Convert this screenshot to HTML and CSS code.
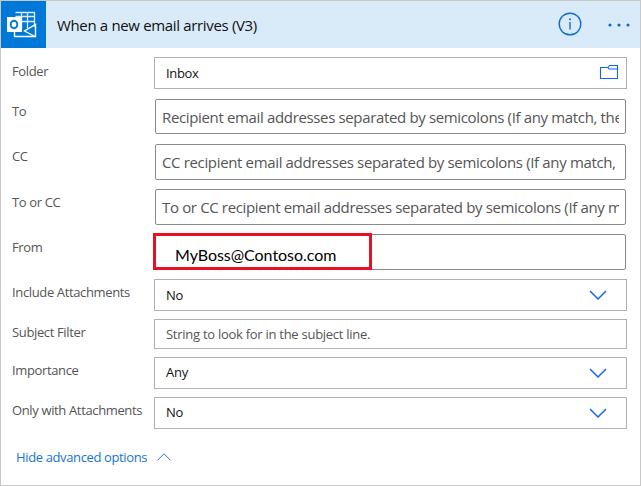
FILE: index.html
```html
<!DOCTYPE html>
<html lang="en">
<head>
<meta charset="utf-8">
<title>When a new email arrives (V3)</title>
<link rel="stylesheet" href="styles.css">
</head>
<body>
<main class="card">
  <header class="header">
    <div class="app-icon">
      <svg width="45" height="47" viewBox="0 0 45 47" fill="none">
        <path d="M14.500 11.500H33.500V26M14.500 15.500H33.500M14.500 20.500H33.500M20.500 11.500V30M26.500 11.500V27" stroke="#d9ebfa" stroke-width="1.300"/>
        <path d="M13 36V30L21 27L34.500 35.500" fill="#0078d7"/>
        <path d="M13.500 30V35.500H34.500V23.500L23.500 30L34 35.500" stroke="#fff" stroke-width="1.400"/>
        <rect x="6" y="16" width="15" height="15" fill="#fff"/>
        <ellipse cx="13" cy="23.500" rx="3.300" ry="3.800" stroke="#0078d7" stroke-width="2"/>
      </svg>
    </div>
    <h1 class="title">When a new email arrives (V3)</h1>
    <svg class="info" width="24" height="24" viewBox="0 0 24 24" fill="none">
      <circle cx="12" cy="12" r="10.800" stroke="#0f6fd1" stroke-width="1.400"/>
      <path d="M12 10V17.500" stroke="#0f6fd1" stroke-width="1.400"/>
      <circle cx="12" cy="7.300" r="1" fill="#0f6fd1"/>
    </svg>
    <svg class="more" width="24" height="4" viewBox="0 0 24 4" fill="#0f6fd1">
      <circle cx="3" cy="2" r="1.600"/><circle cx="12" cy="2" r="1.600"/><circle cx="21" cy="2" r="1.600"/>
    </svg>
  </header>
  <section class="fields">
    <div class="row folder"><span class="label">Folder</span>
      <div class="box"><span class="value inbox">Inbox</span>
        <svg class="folder-icon" width="20" height="16" viewBox="0 0 20 16" fill="none" stroke="#1464f0"><path d="M1.500 3.500H9L10.500 1.500H18.500V14.500H1.500ZM9 3.500L10 5H18.500" stroke-width="1.100"/></svg>
      </div></div>
    <div class="row large to"><span class="label">To</span>
      <div class="box"><span class="hint">Recipient email addresses separated by semicolons (If any match, the trigger will run)</span></div></div>
    <div class="row large cc"><span class="label">CC</span>
      <div class="box"><span class="hint">CC recipient email addresses separated by semicolons (If any match, the trigger will run)</span></div></div>
    <div class="row large tocc"><span class="label">To or CC</span>
      <div class="box"><span class="hint">To or CC recipient email addresses separated by semicolons (If any match, the trigger will run)</span></div></div>
    <div class="row large from"><span class="label">From</span>
      <div class="box"><div class="highlight">MyBoss@Contoso.com</div></div></div>
    <div class="row include"><span class="label">Include Attachments</span>
      <div class="box"><span class="value">No</span><svg class="chevron" width="18" height="10" viewBox="0 0 18 10"><path d="M1 1L9 9L17 1"/></svg></div></div>
    <div class="row subject"><span class="label">Subject Filter</span>
      <div class="box"><span class="value subject-hint">String to look for in the subject line.</span></div></div>
    <div class="row importance"><span class="label">Importance</span>
      <div class="box"><span class="value">Any</span><svg class="chevron" width="18" height="10" viewBox="0 0 18 10"><path d="M1 1L9 9L17 1"/></svg></div></div>
    <div class="row only"><span class="label">Only with Attachments</span>
      <div class="box"><span class="value">No</span><svg class="chevron" width="18" height="10" viewBox="0 0 18 10"><path d="M1 1L9 9L17 1"/></svg></div></div>
  </section>
  <a class="toggle"><span>Hide advanced options</span><svg width="14" height="8" viewBox="0 0 14 8" fill="none" stroke="#2b6fd6"><path d="M.5 7.300L7 .8L13.500 7.300"/></svg></a>
</main>
</body>
</html>
```
FILE: styles.css
```css
* { box-sizing: border-box; }
body {
  margin: 0;
  background: #fff;
  font-family: "Open Sans", "Noto Sans", sans-serif;
  font-size: 13px;
  line-height: 18px;
  white-space: nowrap;
}
.card {
  width: 641px;
  height: 486px;
  border: 1px solid #c8c8c8;
}
.header {
  display: flex;
  align-items: center;
  height: 47px;
  padding-right: 9px;
  background: #d9eaf8;
}
.app-icon {
  width: 45px;
  height: 47px;
  background: #0078d7;
}
.app-icon svg { display: block; }
.title {
  flex: 1;
  margin: 0 0 0 11px;
  color: #111;
  font-size: 15px;
  font-weight: 400;
  letter-spacing: -0.34px;
}
.info { margin: 0 25px 1px 0; }
.fields { padding: 9px 13px 0 11px; }
.row {
  display: flex;
  height: 32px;
  margin-bottom: 8px;
}
.label {
  width: 142px;
  padding-top: 4px;
  color: #555;
  letter-spacing: -0.36px;
}
.folder .label { padding-top: 5px; }
.box {
  display: flex;
  flex: 1;
  min-width: 0;
  align-items: center;
  justify-content: space-between;
  border: 1px solid #b0b0b0;
}
.value {
  margin-left: 11px;
  color: #111;
  letter-spacing: -0.27px;
}
.inbox { letter-spacing: -0.35px; }
.folder { margin-bottom: 10px; }
.folder-icon { margin: 0 7px 2px 0; }
.large {
  height: 35px;
  margin-bottom: 10px;
}
.large .label {
  width: 143px;
  padding-top: 4px;
}
.to .label { padding-top: 3px; }
.large .box {
  margin-right: 1px;
  padding: 0 6px;
  border-color: #8a8a8a;
  border-radius: 2px;
}
.hint {
  overflow: hidden;
  color: #555;
  font-size: 15px;
  line-height: 22px;
  letter-spacing: -0.35px;
}
.cc, .tocc, .from {
  height: 36px;
  margin-bottom: 9px;
}
.cc .label { padding-top: 3px; }
.from .box {
  align-items: flex-start;
  padding: 0;
}
.highlight {
  width: 219px;
  height: 37px;
  margin: -2px 0 0 -3px;
  padding: 10px 0 0 19px;
  border: 3px solid #e81123;
  background: #fff;
  color: #000;
  font-family: Lato, sans-serif;
  font-size: 16px;
  letter-spacing: -0.03px;
}
.include .value { margin-bottom: 1px; }
.subject { height: 30px; }
.subject-hint { color: #555; }
.chevron {
  margin-right: 19px;
  fill: none;
  stroke: #1464f0;
  stroke-width: 1.500;
}
.importance .value, .only .value { margin-bottom: 2px; }
.toggle {
  display: flex;
  align-items: center;
  gap: 10px;
  margin: 19px 0 0 15px;
  color: #1474d4;
  letter-spacing: -0.37px;
}
```
